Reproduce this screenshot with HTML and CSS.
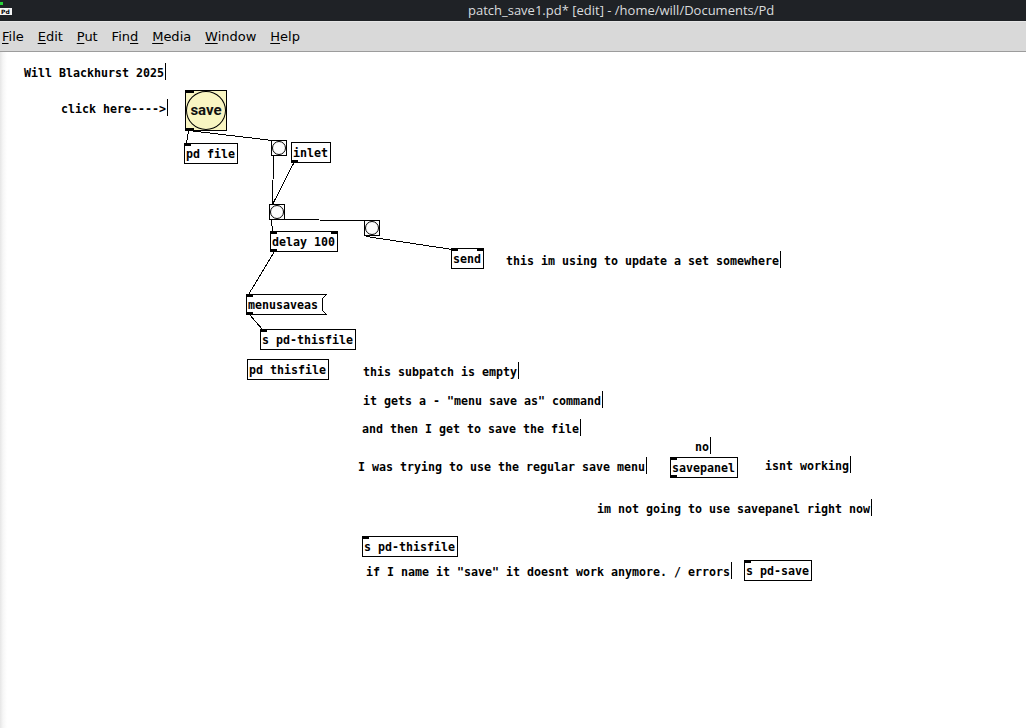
FILE: index.html
```html
<!DOCTYPE html>
<html lang="en">
<head>
<meta charset="utf-8">
<title>patch_save1.pd* [edit] - /home/will/Documents/Pd</title>
<link rel="stylesheet" href="styles.css">
</head>
<body>
<div class="window">
  <header class="titlebar">
    <span class="app-icon"><span class="app-dot"></span><span class="app-tag">Pd</span></span>
    <span class="title">patch_save1.pd* [edit] - /home/will/Documents/Pd</span>
  </header>
  <nav class="menubar">
    <span class="menu-item"><u>F</u>ile</span>
    <span class="menu-item"><u>E</u>dit</span>
    <span class="menu-item"><u>P</u>ut</span>
    <span class="menu-item">Fin<u>d</u></span>
    <span class="menu-item"><u>M</u>edia</span>
    <span class="menu-item"><u>W</u>indow</span>
    <span class="menu-item"><u>H</u>elp</span>
  </nav>
  <main class="canvas">
    <svg class="wires" width="1026" height="675" viewBox="0 53 1026 675" shape-rendering="crispEdges">
      <g stroke="#000" stroke-width="1" fill="none">
        <line x1="188.5" y1="131.5" x2="186.5" y2="144.5"/>
        <line x1="188.5" y1="131.5" x2="272.5" y2="141.5"/>
        <line x1="273.5" y1="157.5" x2="272.5" y2="205.5"/>
        <line x1="294.5" y1="162.5" x2="272.5" y2="205.5"/>
        <line x1="271.5" y1="220.5" x2="365.5" y2="221.5"/>
        <line x1="271.5" y1="220.5" x2="272.5" y2="232.5"/>
        <line x1="366.5" y1="237.5" x2="452.5" y2="250.5"/>
        <line x1="274.5" y1="252.5" x2="248.5" y2="295.5"/>
        <line x1="249.5" y1="315.5" x2="262.5" y2="330.5"/>
      </g>
    </svg>

    <!-- comments -->
    <div class="comment" style="left:24px;top:11px">Will Blackhurst 2025</div>
    <div class="comment" style="left:61px;top:47px">click here----&gt;</div>
    <div class="comment" style="left:506px;top:199px">this im using to update a set somewhere</div>
    <div class="comment" style="left:363px;top:310px">this subpatch is empty</div>
    <div class="comment" style="left:363px;top:339px">it gets a - "menu save as" command</div>
    <div class="comment" style="left:362px;top:367px">and then I get to save the file</div>
    <div class="comment" style="left:695px;top:385px">no</div>
    <div class="comment" style="left:358px;top:405px">I was trying to use the regular save menu</div>
    <div class="comment" style="left:765px;top:404px">isnt working</div>
    <div class="comment" style="left:597px;top:447px">im not going to use savepanel right now</div>
    <div class="comment" style="left:366px;top:510px">if I name it "save" it doesnt work anymore. / errors</div>

    <!-- big bang -->
    <div class="bng bng-big" style="left:185px;top:38px">
      <span class="bng-circle"></span>
      <span class="bng-label">save</span>
      <span class="tab tab-in-l"></span>
      <span class="tab tab-out-l"></span>
    </div>

    <!-- small bangs -->
    <div class="bng" style="left:271px;top:88px"><span class="bng-circle"></span></div>
    <div class="bng" style="left:269px;top:152px"><span class="bng-circle"></span></div>
    <div class="bng" style="left:364px;top:168px"><span class="bng-circle"></span></div>

    <!-- objects -->
    <div class="obj" style="left:184px;top:91px">pd file<span class="tab tab-in-l"></span></div>
    <div class="obj" style="left:291px;top:90px">inlet<span class="tab tab-out-l"></span></div>
    <div class="obj" style="left:270px;top:179px">delay 100<span class="tab tab-in-l"></span><span class="tab tab-in-r"></span><span class="tab tab-out-l"></span></div>
    <div class="obj" style="left:451px;top:196px">send<span class="tab tab-in-l"></span><span class="tab tab-in-r"></span></div>
    <div class="msg" style="left:246px;top:242px">
      <svg class="msg-shape" width="81" height="21" viewBox="0 0 81 21" shape-rendering="crispEdges"><polygon points="0.5,0.5 80.5,0.5 76.5,4.5 76.5,16.5 80.5,20.5 0.5,20.5" fill="#fff" stroke="#000" stroke-width="1"/></svg>
      <span class="msg-text">menusaveas</span>
      <span class="tab tab-in-l"></span>
      <span class="tab tab-out-l"></span>
    </div>
    <div class="obj" style="left:260px;top:277px">s pd-thisfile<span class="tab tab-in-l"></span></div>
    <div class="obj" style="left:247px;top:307px">pd thisfile</div>
    <div class="obj" style="left:670px;top:405px">savepanel<span class="tab tab-in-l"></span><span class="tab tab-out-l"></span></div>
    <div class="obj" style="left:362px;top:484px">s pd-thisfile<span class="tab tab-in-l"></span></div>
    <div class="obj" style="left:744px;top:508px">s pd-save<span class="tab tab-in-l"></span></div>
  </main>
</div>
</body>
</html>
```

FILE: styles.css
```css
html, body {
  margin: 0;
  padding: 0;
  background: #ffffff;
}

.window {
  width: 1026px;
  height: 728px;
  display: flex;
  flex-direction: column;
  overflow: hidden;
}

/* ---------- title bar ---------- */
.titlebar {
  height: 21px;
  flex: 0 0 auto;
  background: #1f2226;
  border-bottom: 1px solid #e6e6e6;
  display: flex;
  align-items: flex-start;
}

.app-icon {
  width: 12px;
  display: flex;
  flex-direction: column;
  align-items: flex-start;
}

.app-dot {
  width: 3px;
  height: 3px;
  margin-top: 2px;
  background: #27d43a;
}

.app-tag {
  margin-top: 3px;
  width: 12px;
  height: 7px;
  background: #f4f4f4;
  color: #000;
  font: bold 6px/7px "DejaVu Sans", sans-serif;
  padding-left: 1px;
  box-sizing: border-box;
}

.title {
  margin-left: 456px;
  font: 13px/20px "Open Sans", "Noto Sans", sans-serif;
  color: #dadcde;
  white-space: nowrap;
}

/* ---------- menu bar ---------- */
.menubar {
  height: 30px;
  flex: 0 0 auto;
  box-sizing: border-box;
  background: #d9d9d9;
  border-bottom: 1px solid #9c9c9c;
  display: flex;
  align-items: center;
  gap: 13.9px;
  padding-left: 2px;
  padding-bottom: 0;
  font: 13px "DejaVu Sans", sans-serif;
  color: #000;
}

.menu-item u {
  text-decoration-thickness: 1px;
  text-underline-offset: 2px;
}

/* ---------- canvas ---------- */
.canvas {
  position: relative;
  flex: 1 1 auto;
  background: linear-gradient(to right, #e6e6e6 0px, #f6f6f6 3px, #ffffff 7px);
  font-family: "DejaVu Sans Mono", monospace;
  font-weight: bold;
  font-size: 11.63px;
  color: #000;
}

.wires {
  position: absolute;
  left: 0;
  top: 0;
}

.comment {
  position: absolute;
  height: 17px;
  box-sizing: border-box;
  padding-top: 3px;
  line-height: 14px;
  padding-right: 1px;
  border-right: 1px solid #000;
  white-space: pre;
}

.obj {
  position: absolute;
  height: 21px;
  box-sizing: border-box;
  border: 1px solid #000;
  background: #fff;
  padding: 1px 2px 0 1px;
  line-height: 18px;
  white-space: pre;
}

.msg {
  position: absolute;
  width: 81px;
  height: 21px;
}

.msg-shape {
  position: absolute;
  left: 0;
  top: 0;
}

.msg-text {
  position: absolute;
  left: 2px;
  top: 2px;
  line-height: 18px;
  white-space: pre;
}

.tab {
  position: absolute;
  width: 7px;
  height: 3px;
  background: #000;
}

.obj .tab-in-l { left: -1px; top: -1px; }
.obj .tab-in-r { right: -1px; top: -1px; }
.obj .tab-out-l { left: -1px; bottom: -1px; }
.msg .tab-in-l { left: 0; top: 0; }
.msg .tab-out-l { left: 0; bottom: 0; }

/* ---------- bangs ---------- */
.bng {
  position: absolute;
  width: 16px;
  height: 16px;
  box-sizing: border-box;
  border: 1px solid #000;
  background: #fcfcfc;
}

.bng-circle {
  position: absolute;
  left: 0;
  top: 0;
  right: 0;
  bottom: 0;
  border: 1px solid #000;
  border-radius: 50%;
  background: #fcfcfc;
}

.bng-big {
  width: 42px;
  height: 41px;
  background: #f9f5c2;
  display: flex;
  align-items: center;
  justify-content: center;
}

.bng-big .bng-circle {
  background: #f9f5c2;
}

.bng-big .tab-in-l { left: -1px; top: -1px; width: 9px; }
.bng-big .tab-out-l { left: -1px; bottom: -1px; width: 9px; }

.bng-label {
  position: relative;
  top: -1px;
  font-family: "Roboto", "DejaVu Sans", sans-serif;
  font-weight: bold;
  font-size: 15px;
  line-height: 16px;
  color: #111;
}
```
